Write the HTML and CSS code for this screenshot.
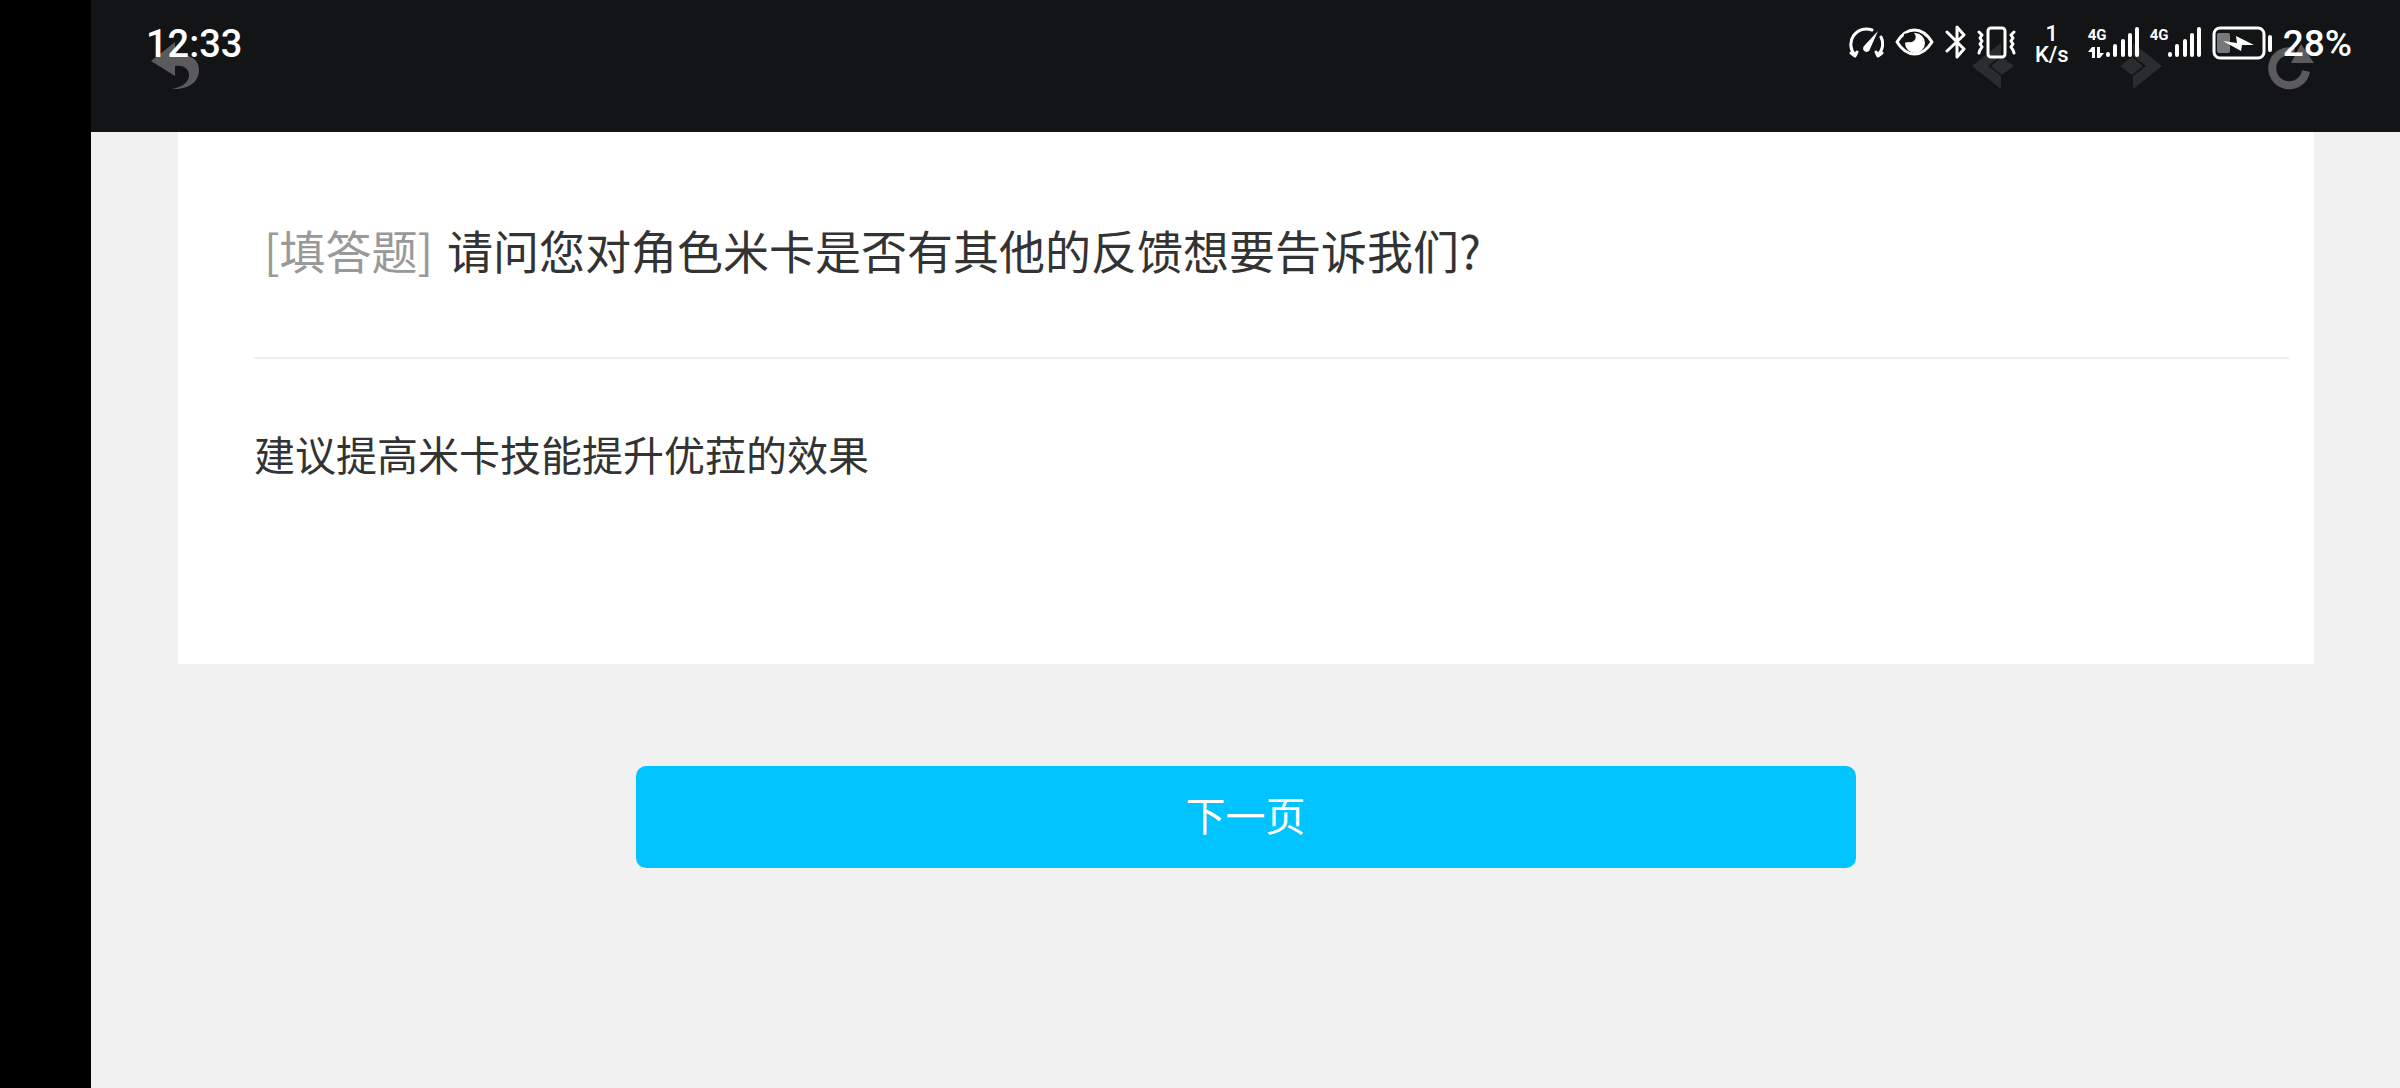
FILE: index.html
```html
<!DOCTYPE html>
<html lang="zh-CN">
<head>
	<meta charset="utf-8">
	<meta name="viewport" content="width=device-width, initial-scale=1">
	<title>问卷</title>
	<link rel="stylesheet" href="styles.css">
</head>
<body>
<div class="page">
	<header class="header">
		<nav class="toolbar">
			<button type="button" class="tool back" aria-label="返回">
				<svg width="48" height="48" viewBox="0 0 48 48"><path d="M0 19 L24 0 V12 C40 12 48 18 48 28 C48 41 36 48 21 47 C32 45 39 39 38 32 C37 26 32 23 24 24 V34 Z"/></svg>
			</button>
			<button type="button" class="tool prev" aria-label="上一页" disabled>
				<svg width="42" height="48" viewBox="0 0 42 48"><path d="M0 24 L29 1 V14 L16 24 L29 34 V47 Z"/><path d="M19 24 L30 15 L42 24 L30 33 Z"/></svg>
			</button>
			<button type="button" class="tool next" aria-label="前进" disabled>
				<svg width="42" height="48" viewBox="0 0 42 48"><path d="M42 24 L13 1 V14 L26 24 L13 34 V47 Z"/><path d="M23 24 L12 15 L0 24 L12 33 Z"/></svg>
			</button>
			<button type="button" class="tool reload" aria-label="刷新">
				<svg width="48" height="48" viewBox="0 0 48 48"><path class="ring" d="M26 10 A17 17 0 1 0 38 29"/><path d="M33 2 L46 21 H23 Z"/></svg>
			</button>
		</nav>
		<div class="status">
			<span class="time">12:33</span>
			<svg width="35" height="40" viewBox="0 0 35 40"><g class="line"><path d="M6 32 A15.500 15.500 0 0 1 23 7"/><path d="M2 30 L6 33 L8 29"/><path d="M32 14 A15.500 15.500 0 0 1 29 32"/><path d="M33 30 L29 33 L27 29"/></g><path class="solid" d="M29 8 L21 26 A3.500 3.500 0 1 1 15 23 Z"/></svg>
			<svg width="39" height="40" viewBox="0 0 39 40"><path class="line" d="M2 19 C12 3 27 3 37 19 C27 35 12 35 2 19 Z"/><circle class="solid" cx="20" cy="20" r="10"/><path class="cut" d="M9 11 L17 9 A5 5 0 0 1 14 19 L8 20 Z"/></svg>
			<svg width="21" height="40" viewBox="0 0 21 40"><path class="line" d="M2 9 L19 26 L12 34 V4 L19 12 L2 28"/></svg>
			<svg width="39" height="40" viewBox="0 0 39 40"><rect class="line" x="11" y="5" width="17" height="29" rx="3"/><path class="line" d="M2 9 L5 12 L3 15 L5 18 L3 21 L5 24 L3 27 L2 30 M37 9 L34 12 L36 15 L34 18 L36 21 L34 24 L36 27 L37 30"/></svg>
			<span class="rate"><span>1</span><span>K/s</span></span>
			<span class="signal">
				<span class="net">4G<svg width="16" height="11" viewBox="0 0 16 11"><path class="solid" d="M4 0 H7 V11 H4 V5 H0 Z M9 0 H12 V6 H16 L12 11 H9 Z"/></svg></span>
				<svg width="33" height="40" viewBox="0 0 33 40"><path class="bars" d="M2 31 V32 M9 23 V32 M17 18 V32 M24 12 V32 M31 6 V32"/></svg>
			</span>
			<span class="signal">
				<span class="net">4G</span>
				<svg width="33" height="40" viewBox="0 0 33 40"><path class="bars" d="M2 31 V32 M9 23 V32 M17 18 V32 M24 12 V32 M31 6 V32"/></svg>
			</span>
			<svg width="60" height="40" viewBox="0 0 60 40"><rect class="charge" x="5" y="10" width="13" height="20" rx="2"/><rect class="line" x="2" y="5" width="50" height="30" rx="6"/><rect class="solid" x="56" y="12" width="4" height="17" rx="2"/><path class="solid" d="M11 18 L25 20 L24 13 L42 22 L30 22 L29 28 Z"/></svg>
			<span class="battery">28%</span>
		</div>
	</header>

	<main>
		<form action="#">
			<div class="card">
				<label class="question" for="answer"><span class="type">[填答题]</span>请问您对角色米卡是否有其他的反馈想要告诉我们?</label>
				<textarea class="answer" id="answer" rows="3" spellcheck="false">建议提高米卡技能提升优菈的效果</textarea>
			</div>
			<button type="submit" class="submit">下一页</button>
		</form>
	</main>
</div>
</body>
</html>
```

FILE: styles.css
```css
* { box-sizing: border-box; }
body {
	margin: 0;
	padding-left: 91px;
	background: #000;
	color: #333;
	font-family: "Noto Sans CJK SC", sans-serif;
}
button, textarea {
	margin: 0;
	padding: 0;
	border: 0;
	font-family: inherit;
}
svg { display: block; flex: none; }

.page {
	min-height: 100vh;
	background: #f1f1f1;
}

/* header: browser toolbar with the phone status on top of it */
.header {
	position: relative;
	height: 132px;
	background: #131416;
}
.toolbar {
	display: flex;
	padding: 42px 84px 0 60px;
}
.tool {
	background: none;
	fill: #5b5b5d;
}
.tool:disabled { fill: #2b2c2e; }
.back { margin-right: auto; }
.prev, .next { margin-right: 106px; }
.ring {
	fill: none;
	stroke: #5b5b5d;
	stroke-width: 8;
}

.status {
	position: absolute;
	top: 23px;
	left: 0;
	right: 0;
	display: flex;
	gap: 11px;
	padding: 0 48px 0 55px;
	color: #fff;
	font-family: Roboto, sans-serif;
	line-height: 42px;
}
.time {
	margin-right: auto;
	font-size: 38px;
	font-weight: 500;
}
.battery {
	font-size: 37px;
	font-weight: 500;
}
.line {
	fill: none;
	stroke: #fff;
	stroke-width: 3;
	stroke-linecap: round;
	stroke-linejoin: round;
}
.solid { fill: #fff; }
.cut { fill: #131416; }
.charge { fill: #77787a; }
.bars {
	stroke: #fff;
	stroke-width: 4;
	stroke-linecap: round;
}
.rate {
	display: flex;
	flex-direction: column;
	padding: 0 8px;
	font-size: 22px;
	font-weight: 500;
	line-height: 21px;
	text-align: center;
}
.signal { display: flex; }
.net {
	width: 18px;
	font-size: 15px;
	font-weight: 700;
	line-height: 24px;
}

/* survey */
.card {
	margin: 0 86px 0 87px;
	padding: 87px 25px 61px 76px;
	background: #fff;
}
.question {
	display: block;
	padding: 0 10px 78px;
	border-bottom: 2px solid #eee;
	font-size: 46px;
	line-height: 60px;
}
.type {
	margin-right: 14px;
	color: #999;
}
.answer {
	display: block;
	width: 100%;
	margin-top: 64px;
	background: none;
	color: #333;
	font-size: 41px;
	line-height: 60px;
	resize: none;
	outline: 0;
}
.submit {
	display: block;
	width: 80%;
	max-width: 1220px;
	margin: 102px auto 0;
	padding: 18px 18px 24px;
	border-radius: 10px;
	background: #00c3ff;
	color: #fff;
	font-size: 40px;
	line-height: 60px;
}
```
